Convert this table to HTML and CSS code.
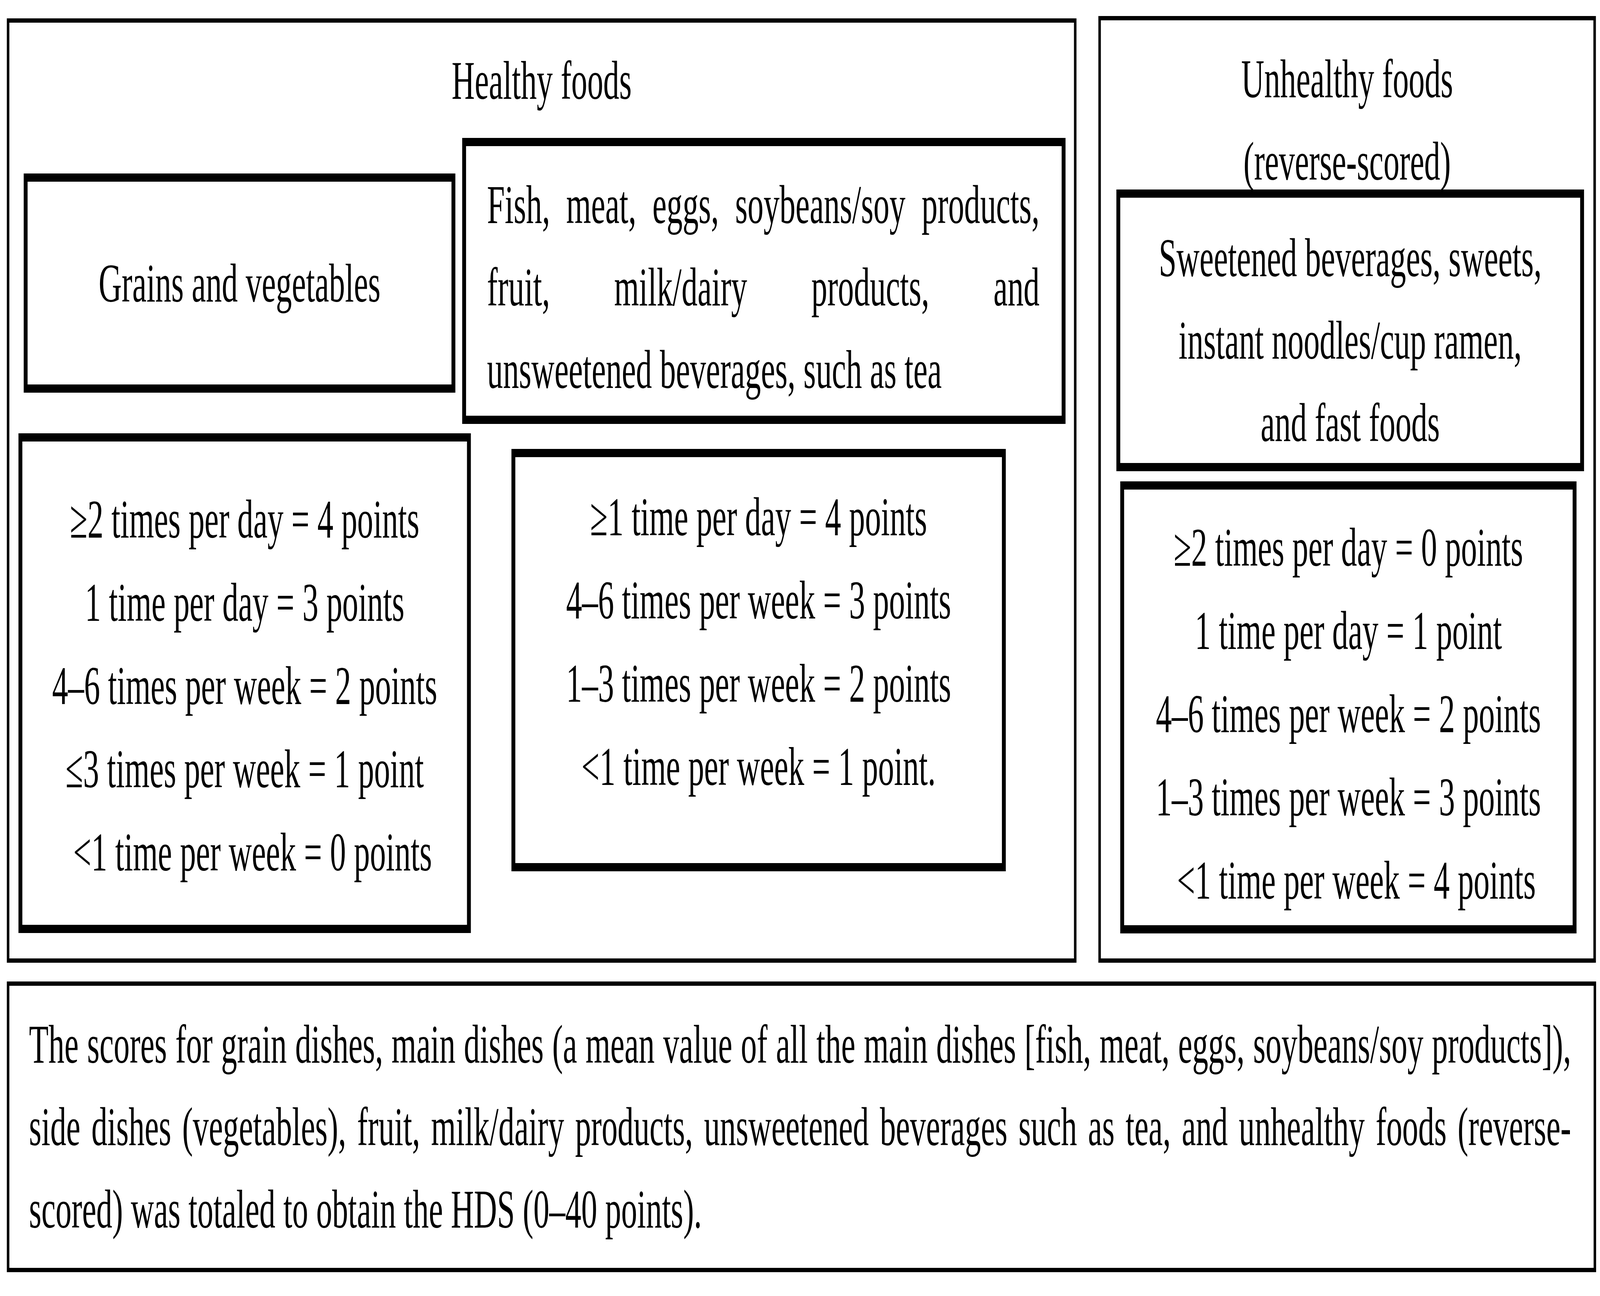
FILE: index.html
```html
<!DOCTYPE html>
<html lang="en">
<head>
<meta charset="utf-8">
<title>Healthy Dietary Score</title>
<link rel="stylesheet" href="styles.css">
</head>
<body>
<div class="frame">
  <div class="stage">
    <div class="figure">
      <div class="top">
        <section class="group healthy">
          <h2 class="group-title">Healthy foods</h2>
          <div class="row row-cats">
            <div class="box grains">Grains and vegetables</div>
            <div class="box fish">
              <span class="jl">Fish, meat, eggs, soybeans/soy products,</span>
              <span class="jl">fruit, milk/dairy products, and</span>
              <span class="jl last">unsweetened beverages, such as tea</span>
            </div>
          </div>
          <div class="row row-scores">
            <div class="box score score-a">
              <div>≥2 times per day = 4 points</div>
              <div>1 time per day = 3 points</div>
              <div>4–6 times per week = 2 points</div>
              <div>≤3 times per week = 1 point</div>
              <div>&nbsp;&nbsp;&lt;1 time per week = 0 points</div>
            </div>
            <div class="box score score-b">
              <div>≥1 time per day = 4 points</div>
              <div>4–6 times per week = 3 points</div>
              <div>1–3 times per week = 2 points</div>
              <div>&lt;1 time per week = 1 point.</div>
            </div>
          </div>
        </section>
        <section class="group unhealthy">
          <h2 class="group-title">Unhealthy foods<br>(reverse-scored)</h2>
          <div class="box sweets">Sweetened beverages, sweets,<br>instant noodles/cup ramen,<br>and fast foods</div>
          <div class="box score score-c">
            <div>≥2 times per day = 0 points</div>
            <div>1 time per day = 1 point</div>
            <div>4–6 times per week = 2 points</div>
            <div>1–3 times per week = 3 points</div>
            <div>&nbsp;&nbsp;&lt;1 time per week = 4 points</div>
          </div>
        </section>
      </div>
      <p class="note">The scores for grain dishes, main dishes (a mean value of all the main dishes [fish, meat, eggs, soybeans/soy products]), side dishes (vegetables), fruit, milk/dairy products, unsweetened beverages such as tea, and unhealthy foods (reverse-scored) was totaled to obtain the HDS (0–40 points).</p>
    </div>
  </div>
</div>
<script src="app.js"></script>
</body>
</html>
```

FILE: styles.css
```css
:root {
  --sx: 1;
  --sy: 1;
}

* {
  box-sizing: border-box;
  margin: 0;
  padding: 0;
}

html,
body {
  width: 100%;
  height: 100%;
  background: #ffffff;
  overflow: hidden;
}

body {
  font-family: "Liberation Serif", "Times New Roman", serif;
  font-size: 140px;
  line-height: 211px;
  color: #000000;
}

/* The window frame clips the drawing canvas so nothing scrolls. */
.frame {
  width: 100vw;
  height: 100vh;
  overflow: hidden;
}

/* The figure is drawn on a 7017 x 3317 canvas and fitted to the window. */
.stage {
  width: 7017px;
  height: 3317px;
  transform: scale(var(--sx), var(--sy));
  transform-origin: 0 0;
}

.figure {
  width: 7017px;
  padding: 41px 0 0 30px;
}

.top {
  display: flex;
  align-items: flex-end;
  gap: 96px;
}

.group {
  border: 11px solid #000000;
}

.healthy {
  width: 4691px;
  height: 2417px;
}

.unhealthy {
  width: 2182px;
  height: 2423px;
}

.group-title {
  font-size: 140px;
  font-weight: normal;
  line-height: 211px;
  text-align: center;
}

.healthy .group-title {
  padding-top: 42px;
}

.unhealthy .group-title {
  padding-top: 44px;
}

.row {
  display: flex;
  align-items: flex-start;
}

.row-cats {
  margin: 42px 0 0 63px;
  gap: 30px;
}

.row-scores {
  margin: 24px 0 0 40px;
  gap: 178px;
}

.box {
  border-style: solid;
  border-color: #000000;
  border-width: 21px 17px;
}

.grains {
  width: 1893px;
  height: 561px;
  margin-top: 91px;
  display: flex;
  align-items: center;
  justify-content: center;
}

.fish {
  width: 2646px;
  height: 732px;
  padding: 44px 97px 0 92px;
}

.jl {
  display: block;
  text-align: justify;
  text-align-last: justify;
}

.jl.last {
  text-align-last: left;
}

.score {
  text-align: center;
  line-height: 213px;
}

.score-a {
  width: 1984px;
  height: 1279px;
  padding-top: 92px;
}

.score-b {
  width: 2168px;
  height: 1081px;
  margin-top: 40px;
  padding-top: 46px;
}

.sweets {
  width: 2051px;
  height: 721px;
  margin: -33px 0 0 68px;
  padding-top: 48px;
  text-align: center;
}

.score-c {
  width: 2001px;
  height: 1157px;
  margin: 26px 0 0 85px;
  padding-top: 41px;
}

.note {
  width: 6970px;
  height: 744px;
  margin-top: 48px;
  border: 11px solid #000000;
  padding: 44px 99px 0 86px;
  text-align: justify;
  line-height: 211px;
}
```

FILE: app.js
```js
(function () {
  var root = document.documentElement;
  function fit() {
    root.style.setProperty("--sx", String(window.innerWidth / 7017));
    root.style.setProperty("--sy", String(window.innerHeight / 3317));
  }
  fit();
  window.addEventListener("resize", fit);
})();
```
